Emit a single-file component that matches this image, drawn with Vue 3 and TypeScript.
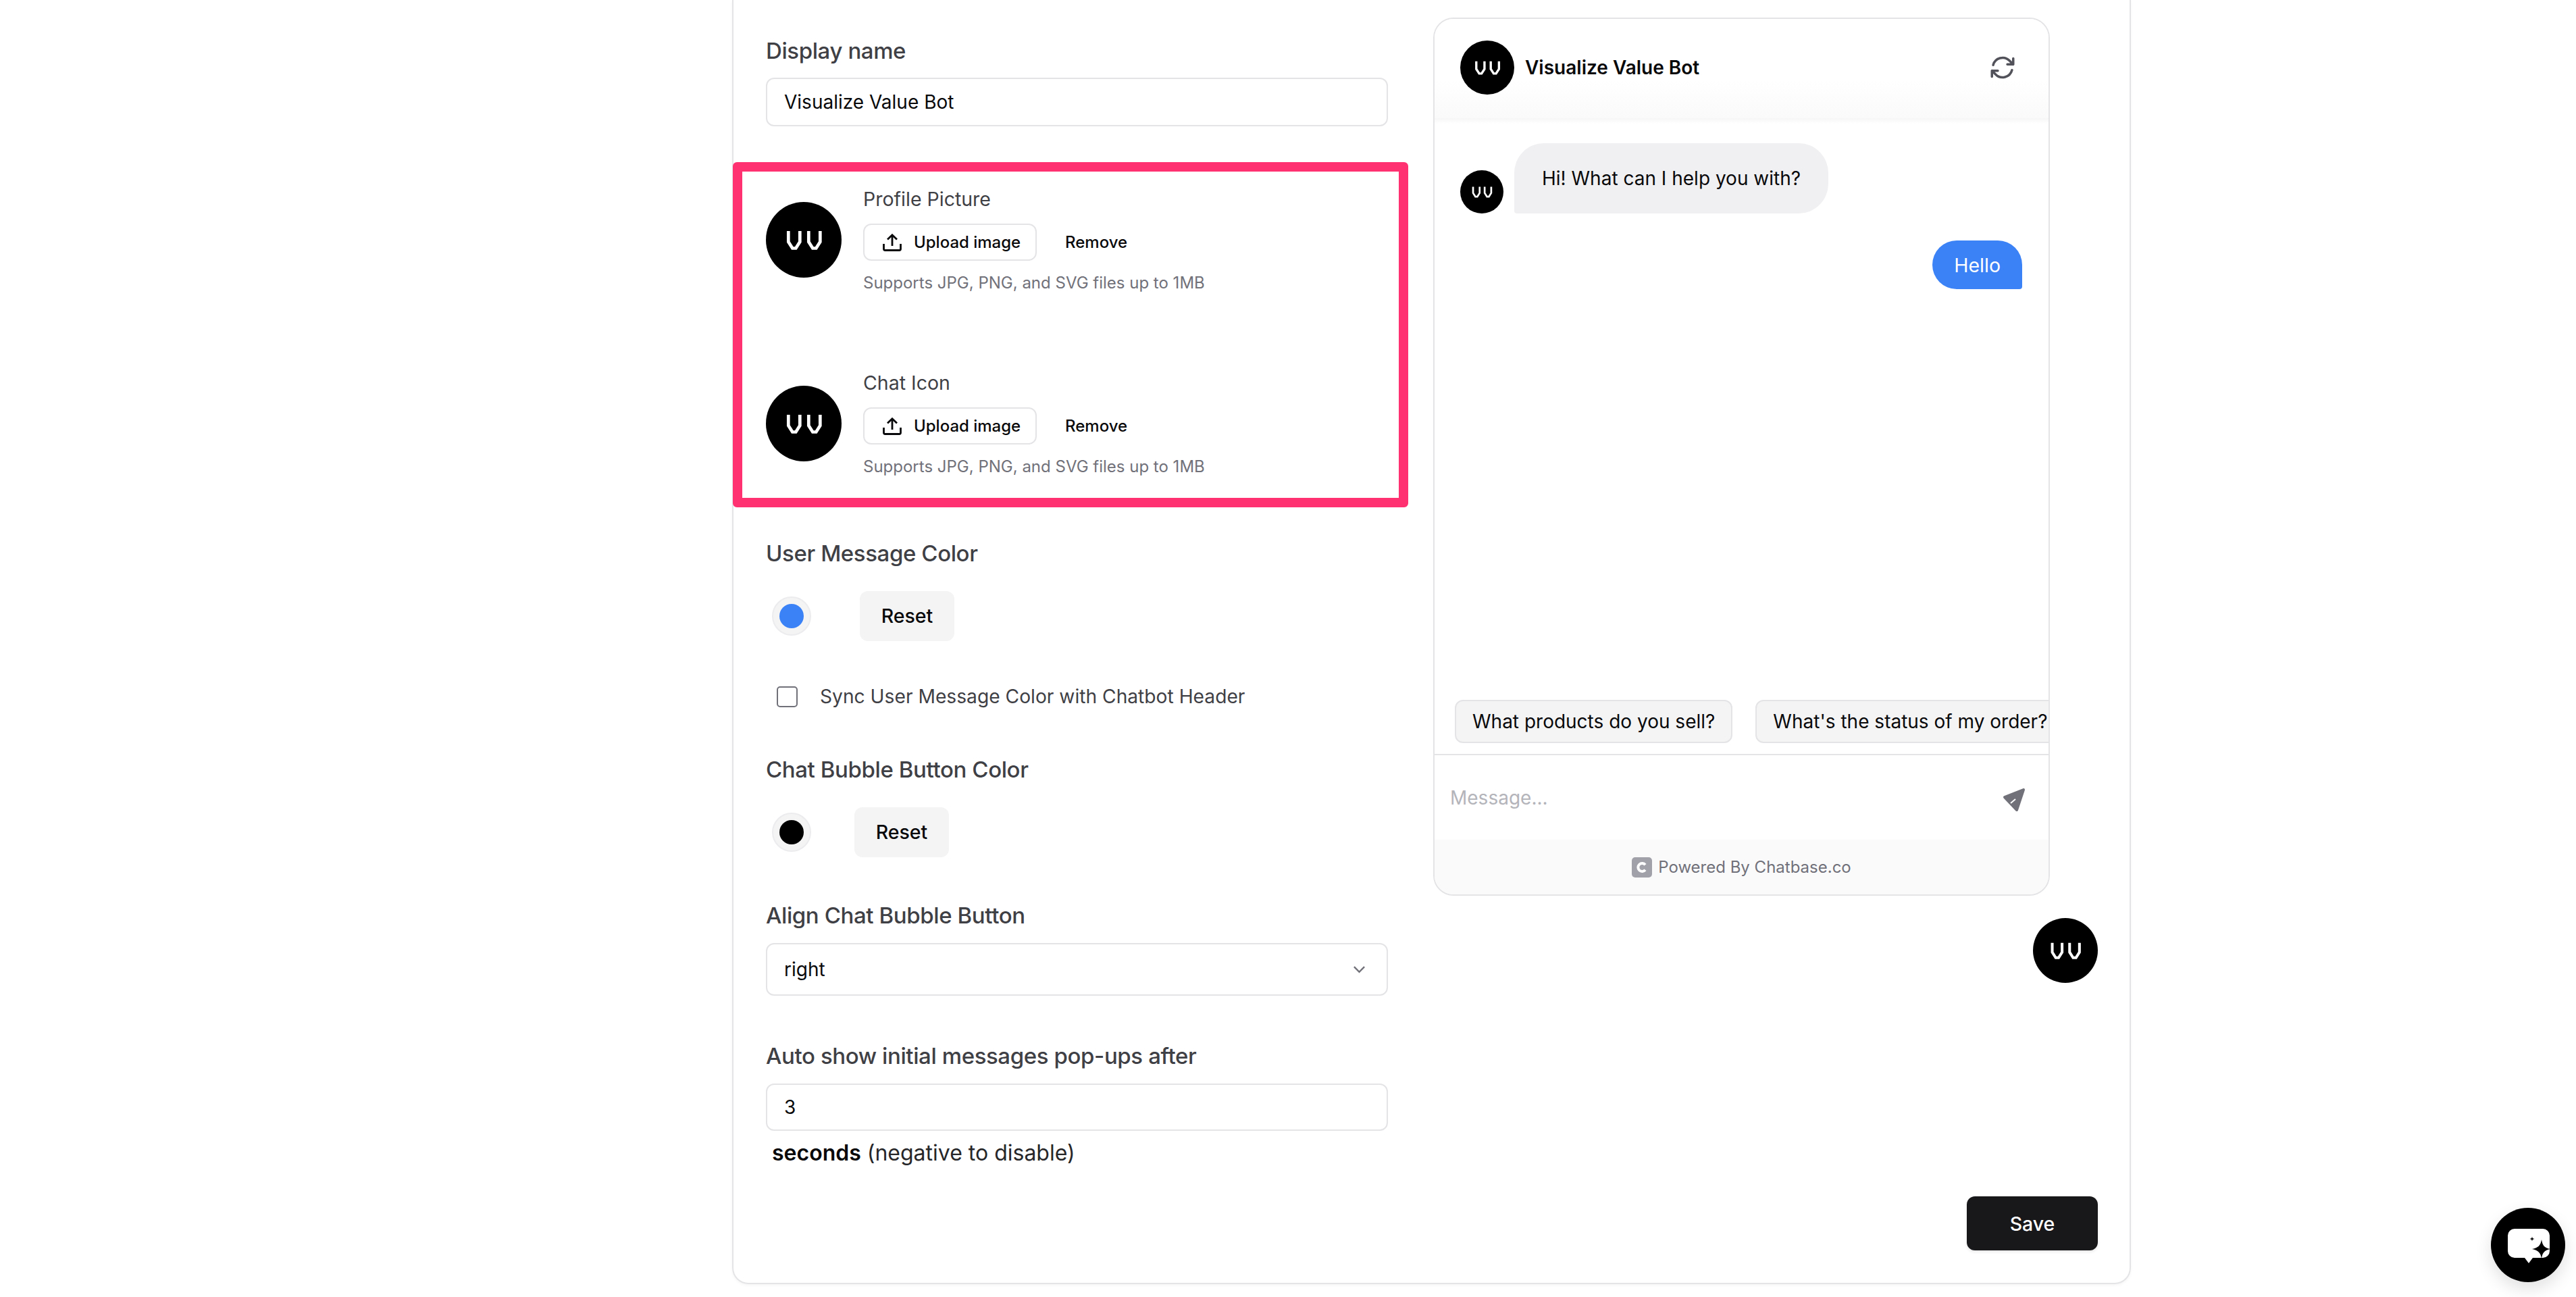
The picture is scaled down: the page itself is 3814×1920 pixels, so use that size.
<template>
  <div class="page">
    <div class="panel">
      <div class="form">
        <div class="label display-label">Display name</div>
        <div class="field name-field">Visualize Value Bot</div>

        <div class="highlight">
          <div v-for="item in uploads" :key="item" class="upload-row">
            <span class="logo logo-lg">
              <svg viewBox="0 0 112 112"><path :d="vvPath" /></svg>
            </span>
            <div class="upload-body">
              <div class="upload-title">{{ item }}</div>
              <div class="upload-actions">
                <button class="upload-btn">
                  <svg viewBox="0 0 28 26" class="upload-icon">
                    <path d="M14 18V2M7 8.500 14 1.800 21 8.500M1.500 15v7.500a2 2 0 0 0 2 2h21a2 2 0 0 0 2-2V15" />
                  </svg>
                  Upload image
                </button>
                <button class="remove-btn">Remove</button>
              </div>
              <div class="upload-hint">Supports JPG, PNG, and SVG files up to 1MB</div>
            </div>
          </div>
        </div>

        <div class="label user-color-label">User Message Color</div>
        <div class="swatch-row user-swatch">
          <span class="swatch"><i class="dot dot-blue"></i></span>
          <button class="reset-btn">Reset</button>
        </div>

        <div class="sync-row">
          <span class="checkbox"></span>
          <span>Sync User Message Color with Chatbot Header</span>
        </div>

        <div class="label bubble-color-label">Chat Bubble Button Color</div>
        <div class="swatch-row bubble-swatch">
          <span class="swatch"><i class="dot dot-black"></i></span>
          <button class="reset-btn">Reset</button>
        </div>

        <div class="label align-label">Align Chat Bubble Button</div>
        <div class="field select-field">
          <span>right</span>
          <svg viewBox="0 0 20 12" class="chevron"><path d="M2 2l8 8 8-8" /></svg>
        </div>

        <div class="label auto-label">Auto show initial messages pop-ups after</div>
        <div class="field seconds-field">3</div>
        <div class="seconds-note"><b>seconds</b> (negative to disable)</div>
      </div>

      <div class="preview">
        <div class="chat">
          <div class="chat-header">
            <span class="logo logo-md">
              <svg viewBox="0 0 112 112"><path :d="vvPath" /></svg>
            </span>
            <span class="chat-name">Visualize Value Bot</span>
            <svg viewBox="0 0 24 24" class="refresh">
              <path d="M16.023 9.348h4.992v-.001M2.985 19.644v-4.992m0 0h4.992m-4.993 0l3.181 3.183a8.25 8.25 0 0013.803-3.7M4.031 9.865a8.25 8.25 0 0113.803-3.7l3.181 3.182m0-4.991v4.99" />
            </svg>
          </div>
          <div class="chat-body">
            <div class="bot-line">
              <span class="logo logo-sm">
                <svg viewBox="0 0 112 112"><path :d="vvPath" /></svg>
              </span>
              <div class="bot-bubble">Hi! What can I help you with?</div>
            </div>
            <div class="user-bubble">Hello</div>
          </div>
          <div class="chips">
            <span v-for="chip in chips" :key="chip" class="chip">{{ chip }}</span>
          </div>
          <div class="composer">
            <span class="placeholder">Message...</span>
            <svg viewBox="0 0 40 40" class="send">
              <path class="send-shape" d="M31 3 3 14 21 33z" />
              <path class="send-slit" d="M12 23 19 17" />
            </svg>
          </div>
          <div class="chat-footer">
            <svg viewBox="0 0 30 30" class="powered-logo">
              <rect width="30" height="30" rx="5" fill="#a1a1aa" />
              <path d="M20 11.200a6 6 0 1 0 0 7.600" fill="none" stroke="#fff" stroke-width="4" />
            </svg>
            <span>Powered By Chatbase.co</span>
          </div>
        </div>
        <span class="logo logo-bubble">
          <svg viewBox="0 0 112 112"><path :d="vvPath" /></svg>
        </span>
        <button class="save-btn">Save</button>
      </div>
    </div>

    <div class="launcher">
      <svg viewBox="0 0 110 110">
        <path fill="#fff" d="M35 31h42a10 10 0 0 1 10 10v23a10 10 0 0 1-10 10H62l-6 8-6-8H35a10 10 0 0 1-10-10V41a10 10 0 0 1 10-10z" />
        <path fill="#000" d="M75 47c1.500 9 4 12 13 14-9 2-11.500 5-13 14-1.500-9-5-12-14-14 9-2 12.500-5 14-14z" />
        <path fill="#000" d="M61 42.500c.4 2.300 1 2.900 3.500 3.500-2.500.6-3.100 1.200-3.500 3.500-.4-2.300-1-2.900-3.500-3.500 2.500-.6 3.100-1.200 3.500-3.500z" />
      </svg>
    </div>
  </div>
</template>

<script setup lang="ts">
const uploads: string[] = ['Profile Picture', 'Chat Icon']
const chips: string[] = ['What products do you sell?', "What's the status of my order?"]

// the two chamfered U shapes of the bot logo
const vvPath = 'M33.300 43v16l6 9.500h5l6-9.500V43M63.300 43v16l6 9.500h5l6-9.500V43'
</script>

<style>
html,
body {
  margin: 0;
  background: #fff;
}
</style>

<style scoped>
.page {
  position: relative;
  height: 1920px;
  overflow: hidden;
  font-family: Inter, 'Liberation Sans', sans-serif;
  color: #09090b;
}

.panel {
  display: flex;
  box-sizing: border-box;
  width: 2071px;
  height: 1901px;
  margin-left: 1084px;
  padding: 0 47px 48px 48px;
  border: 2px solid #e4e4e7;
  border-top: 0;
  border-radius: 0 0 24px 24px;
  box-shadow: 0 2px 4px rgba(0, 0, 0, 0.04);
}

button {
  font-family: inherit;
  cursor: pointer;
}

.form {
  display: flex;
  flex-direction: column;
  width: 921px;
  flex-shrink: 0;
  padding-top: 51px;
}

.label {
  font-size: 33px;
  line-height: 48px;
  font-weight: 500;
  letter-spacing: -0.4px;
  color: #3f3f46;
}

.field {
  box-sizing: border-box;
  display: flex;
  align-items: center;
  padding: 0 25px;
  font-size: 28px;
  color: #09090b;
  background: #fff;
  border: 2px solid #e4e4e7;
  border-radius: 12px;
}

.name-field {
  height: 72px;
  margin-top: 16px;
}

.highlight {
  display: flex;
  flex-direction: column;
  gap: 112px;
  box-sizing: border-box;
  height: 511px;
  margin: 53px -30px 0 -49px;
  padding: 21px 0 0 35px;
  border: 14px solid #ff3170;
  border-radius: 6px;
}

.upload-row {
  display: flex;
  gap: 32px;
}

.logo {
  display: block;
  flex-shrink: 0;
  background: #000;
  border-radius: 50%;
}

.logo svg {
  display: block;
  width: 100%;
  height: 100%;
}

.logo path {
  fill: none;
  stroke: #fff;
  stroke-width: 4.700;
}

.logo-lg {
  width: 112px;
  height: 112px;
  margin-top: 24px;
}

.upload-body {
  display: flex;
  flex-direction: column;
}

.upload-title {
  font-size: 28.5px;
  line-height: 40px;
  color: #3f3f46;
}

.upload-actions {
  display: flex;
  align-items: center;
  gap: 42px;
  margin-top: 16px;
}

.upload-btn {
  display: flex;
  align-items: center;
  gap: 18px;
  box-sizing: border-box;
  width: 257px;
  height: 55px;
  padding: 0 0 0 27px;
  font-size: 24px;
  font-weight: 500;
  color: #09090b;
  background: #fff;
  border: 2px solid #e4e4e7;
  border-radius: 12px;
}

.upload-icon {
  width: 28px;
  height: 26px;
  fill: none;
  stroke: #09090b;
  stroke-width: 2.800;
}

.remove-btn {
  padding: 0;
  font-size: 24px;
  font-weight: 500;
  color: #09090b;
  background: none;
  border: 0;
}

.upload-hint {
  margin-top: 17px;
  font-size: 24px;
  line-height: 32px;
  color: #71717a;
}

.user-color-label {
  margin-top: 44px;
}

.swatch-row {
  display: flex;
  align-items: center;
  height: 74px;
  margin-top: 32px;
  padding-left: 9px;
}

.user-swatch {
  gap: 72px;
}

.bubble-swatch {
  gap: 64px;
}

.swatch {
  display: flex;
  align-items: center;
  justify-content: center;
  box-sizing: border-box;
  width: 58px;
  height: 58px;
  background: #f4f4f5;
  border: 2px solid #ececee;
  border-radius: 50%;
}

.dot {
  display: block;
  width: 36px;
  height: 36px;
  border-radius: 50%;
}

.dot-blue {
  background: #3b82f6;
}

.dot-black {
  background: #000;
}

.reset-btn {
  width: 140px;
  height: 74px;
  padding: 0 0 2px;
  font-size: 28.5px;
  font-weight: 500;
  color: #09090b;
  background: #f4f4f5;
  border: 0;
  border-radius: 12px;
}

.sync-row {
  display: flex;
  align-items: center;
  gap: 33px;
  height: 40px;
  margin-top: 62px;
  padding-left: 16px;
  font-size: 28.2px;
  color: #3f3f46;
}

.checkbox {
  display: block;
  box-sizing: border-box;
  width: 31px;
  height: 31px;
  border: 2px solid #71717a;
  border-radius: 5px;
}

.bubble-color-label {
  margin-top: 64px;
}

.align-label {
  margin-top: 62px;
}

.select-field {
  justify-content: space-between;
  height: 78px;
  margin-top: 17px;
  padding-right: 31px;
}

.chevron {
  width: 19px;
  height: 12px;
  fill: none;
  stroke: #71717a;
  stroke-width: 2.500;
}

.auto-label {
  margin-top: 65px;
}

.seconds-field {
  height: 70px;
  margin-top: 17px;
}

.seconds-note {
  margin-top: 13px;
  padding-left: 9px;
  font-size: 32px;
  line-height: 40px;
  color: #27272a;
}

.seconds-note b {
  font-weight: 600;
  color: #09090b;
}

.preview {
  display: flex;
  flex-direction: column;
  align-items: flex-end;
  flex: 1;
  padding-top: 26px;
  margin-left: 67px;
}

.chat {
  display: flex;
  flex-direction: column;
  box-sizing: border-box;
  width: 913px;
  align-self: flex-start;
  height: 1300px;
  overflow: hidden;
  border: 2px solid #e4e4e7;
  border-radius: 30px;
}

.chat-header {
  display: flex;
  align-items: center;
  flex-shrink: 0;
  box-sizing: border-box;
  height: 147px;
  padding: 0 47px 3px 38px;
  background: linear-gradient(#fff 62%, #fafafa 100%);
}

.logo-md {
  width: 80px;
  height: 80px;
}

.chat-name {
  margin-left: 16px;
  font-size: 28px;
  font-weight: 600;
}

.refresh {
  width: 42px;
  height: 42px;
  margin-left: auto;
  fill: none;
  stroke: #52525b;
  stroke-width: 2;
  stroke-linecap: round;
  stroke-linejoin: round;
}

.chat-body {
  flex: 1;
  display: flex;
  flex-direction: column;
  padding: 37px 39px 0 38px;
  background: linear-gradient(#f6f6f6, #fff 8px);
}

.bot-line {
  display: flex;
  align-items: flex-end;
  gap: 16px;
}

.logo-sm {
  width: 64px;
  height: 64px;
}

.bot-bubble {
  display: flex;
  align-items: center;
  box-sizing: border-box;
  height: 104px;
  padding: 0 41px;
  font-size: 28px;
  color: #09090b;
  background: #f0f0f2;
  border-radius: 44px 44px 44px 4px;
}

.user-bubble {
  display: flex;
  align-items: center;
  box-sizing: border-box;
  height: 72px;
  margin-top: 40px;
  align-self: flex-end;
  padding: 0 32px;
  font-size: 28.5px;
  color: #fff;
  background: #3b82f6;
  border-radius: 36px 36px 4px 36px;
}

.chips {
  display: flex;
  gap: 34px;
  flex-shrink: 0;
  padding: 0 0 16px 30px;
  overflow: hidden;
  border-bottom: 2px solid #e4e4e7;
}

.chip {
  display: flex;
  align-items: center;
  box-sizing: border-box;
  height: 64px;
  padding: 0 24px;
  flex-shrink: 0;
  font-size: 28px;
  white-space: nowrap;
  background: #f4f4f5;
  border: 2px solid #e4e4e7;
  border-radius: 12px;
}

.composer {
  display: flex;
  align-items: center;
  justify-content: space-between;
  flex-shrink: 0;
  box-sizing: border-box;
  height: 125px;
  padding: 0 28px 0 23px;
}

.placeholder {
  font-size: 28px;
  color: #b4b4bb;
}

.send {
  width: 40px;
  height: 40px;
  margin-top: 10px;
}

.send-shape {
  fill: #71717a;
  stroke: #71717a;
  stroke-width: 4;
  stroke-linejoin: round;
}

.send-slit {
  fill: none;
  stroke: #fff;
  stroke-width: 2;
}

.chat-footer {
  display: flex;
  align-items: center;
  justify-content: center;
  gap: 9px;
  flex-shrink: 0;
  height: 81px;
  font-size: 24px;
  color: #71717a;
  background: #fafafa;
}

.powered-logo {
  width: 30px;
  height: 30px;
}

.logo-bubble {
  width: 96px;
  height: 96px;
  margin-top: 33px;
}

.save-btn {
  width: 194px;
  height: 80px;
  margin-top: auto;
  padding: 0;
  font-size: 28.5px;
  font-weight: 500;
  color: #fff;
  background: #18181b;
  border: 0;
  border-radius: 12px;
  box-shadow: 0 2px 4px rgba(0, 0, 0, 0.1);
}

.launcher {
  position: absolute;
  left: 3688px;
  top: 1788px;
  width: 110px;
  height: 110px;
  background: #000;
  border-radius: 50%;
  box-shadow: 0 10px 24px rgba(0, 0, 0, 0.12);
}

.launcher svg {
  display: block;
  width: 100%;
  height: 100%;
}
</style>
